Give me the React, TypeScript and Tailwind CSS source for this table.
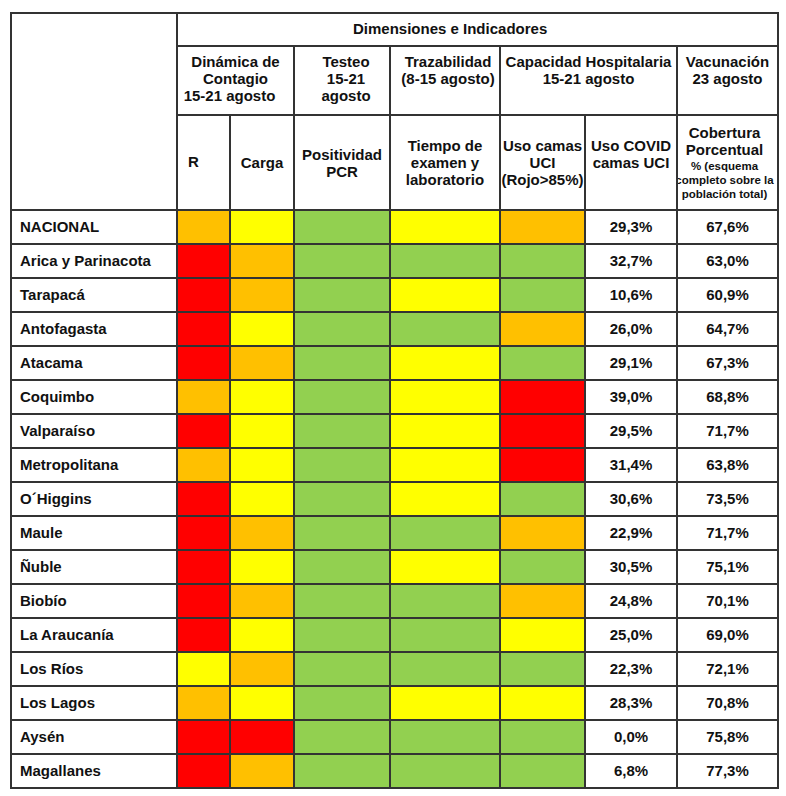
const ORANGE = "bg-[#ffc000]"
const YELLOW = "bg-[#ffff00]"
const GREEN = "bg-[#92d050]"
const RED = "bg-[#ff0000]"

type Level = "O" | "Y" | "G" | "R"

const levelClass: Record<Level, string> = {
    O: ORANGE,
    Y: YELLOW,
    G: GREEN,
    R: RED,
}

interface Region {
    name: string
    levels: Level[]
    covid: string
    vacuna: string
}

const regions: Region[] = [
    { name: "NACIONAL", levels: ["O", "Y", "G", "Y", "O"], covid: "29,3%", vacuna: "67,6%" },
    { name: "Arica y Parinacota", levels: ["R", "O", "G", "G", "G"], covid: "32,7%", vacuna: "63,0%" },
    { name: "Tarapacá", levels: ["R", "O", "G", "Y", "G"], covid: "10,6%", vacuna: "60,9%" },
    { name: "Antofagasta", levels: ["R", "Y", "G", "G", "O"], covid: "26,0%", vacuna: "64,7%" },
    { name: "Atacama", levels: ["R", "O", "G", "Y", "G"], covid: "29,1%", vacuna: "67,3%" },
    { name: "Coquimbo", levels: ["O", "Y", "G", "Y", "R"], covid: "39,0%", vacuna: "68,8%" },
    { name: "Valparaíso", levels: ["R", "Y", "G", "Y", "R"], covid: "29,5%", vacuna: "71,7%" },
    { name: "Metropolitana", levels: ["O", "Y", "G", "Y", "R"], covid: "31,4%", vacuna: "63,8%" },
    { name: "O´Higgins", levels: ["R", "Y", "G", "Y", "G"], covid: "30,6%", vacuna: "73,5%" },
    { name: "Maule", levels: ["R", "O", "G", "G", "O"], covid: "22,9%", vacuna: "71,7%" },
    { name: "Ñuble", levels: ["R", "Y", "G", "Y", "G"], covid: "30,5%", vacuna: "75,1%" },
    { name: "Biobío", levels: ["R", "O", "G", "G", "O"], covid: "24,8%", vacuna: "70,1%" },
    { name: "La Araucanía", levels: ["R", "Y", "G", "G", "Y"], covid: "25,0%", vacuna: "69,0%" },
    { name: "Los Ríos", levels: ["Y", "O", "G", "G", "G"], covid: "22,3%", vacuna: "72,1%" },
    { name: "Los Lagos", levels: ["O", "Y", "G", "Y", "Y"], covid: "28,3%", vacuna: "70,8%" },
    { name: "Aysén", levels: ["R", "R", "G", "G", "G"], covid: "0,0%", vacuna: "75,8%" },
    { name: "Magallanes", levels: ["R", "O", "G", "G", "G"], covid: "6,8%", vacuna: "77,3%" },
]

const cell = "border-r-2 border-b-2 border-[#333]"
const head = `${cell} flex flex-col items-center text-center leading-[17px]`

export default function App() {
    return (
        <div className="min-h-[796px] bg-white pl-[10px] pt-[12px] font-['Liberation_Sans',Arial,sans-serif] text-[15px] font-bold text-[#111]">
            <div className="grid w-max grid-cols-[166px_53px_64px_96px_110px_85px_92px_101px] grid-rows-[33px_69px_95px_repeat(17,34px)] border-l-2 border-t-2 border-[#333]">
                {/* corner */}
                <div className={`${cell} row-span-3`} />
                <div className={`${cell} col-span-7 flex items-center pl-[175px]`}>
                    Dimensiones e Indicadores
                </div>

                {/* dimension titles */}
                <div className={`${head} col-span-2 pt-[6px]`}>
                    <span>Dinámica de</span>
                    <span>Contagio</span>
                    <span className="pr-[12px]">15-21 agosto</span>
                </div>
                <div className={`${head} pt-[6px] pl-[8px]`}>
                    <span>Testeo</span>
                    <span>15-21</span>
                    <span>agosto</span>
                </div>
                <div className={`${head} pt-[6px] pl-[6px]`}>
                    <span>Trazabilidad</span>
                    <span>(8-15 agosto)</span>
                </div>
                <div className={`${head} col-span-2 pt-[6px]`}>
                    <span>Capacidad Hospitalaria</span>
                    <span>15-21 agosto</span>
                </div>
                <div className={`${head} pt-[6px]`}>
                    <span>Vacunación</span>
                    <span>23 agosto</span>
                </div>

                {/* indicators */}
                <div className={`${cell} flex items-center pl-[10px]`}>R</div>
                <div className={`${head} justify-center`}>Carga</div>
                <div className={`${head} justify-center`}>
                    <span>Positividad</span>
                    <span>PCR</span>
                </div>
                <div className={`${head} justify-center`}>
                    <span>Tiempo de</span>
                    <span>examen y</span>
                    <span>laboratorio</span>
                </div>
                <div className={`${head} justify-center overflow-hidden`}>
                    <span className="whitespace-nowrap">Uso camas</span>
                    <span>UCI</span>
                    <span className="whitespace-nowrap">(Rojo&gt;85%)</span>
                </div>
                <div className={`${head} pt-[21px]`}>
                    <span className="whitespace-nowrap">Uso COVID</span>
                    <span>camas UCI</span>
                </div>
                <div className={`${head} justify-center overflow-hidden pr-[6px]`}>
                    <span>Cobertura</span>
                    <span>Porcentual</span>
                    <span className="text-[11.5px] leading-[14px] mt-[1px]">% (esquema</span>
                    <span className="text-[11.5px] leading-[14px] whitespace-nowrap">completo sobre la</span>
                    <span className="text-[11.5px] leading-[14px] whitespace-nowrap">población total)</span>
                </div>

                {/* data */}
                {regions.map((r) => (
                    <div key={r.name} className="contents">
                        <div className={`${cell} flex items-center pl-[8px]`}>{r.name}</div>
                        {r.levels.map((l, i) => (
                            <div key={i} className={`${cell} ${levelClass[l]}`} />
                        ))}
                        <div className={`${cell} flex items-center justify-center`}>{r.covid}</div>
                        <div className={`${cell} flex items-center justify-center`}>{r.vacuna}</div>
                    </div>
                ))}
            </div>
        </div>
    )
}
